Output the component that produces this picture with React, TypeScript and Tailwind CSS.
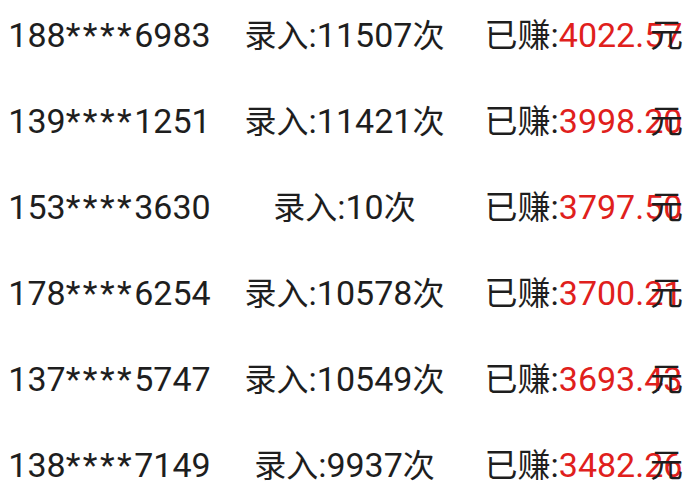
import React from 'react'

const rows = [
  { pre: '188', tail: '6983', count: '11507', money: '4022.57' },
  { pre: '139', tail: '1251', count: '11421', money: '3998.20' },
  { pre: '153', tail: '3630', count: '10', money: '3797.50' },
  { pre: '178', tail: '6254', count: '10578', money: '3700.21' },
  { pre: '137', tail: '5747', count: '10549', money: '3693.43' },
  { pre: '138', tail: '7149', count: '9937', money: '3482.26' },
]

export default function App() {
  return (
    <div
      className="w-[693px] h-[499px] bg-white text-[#1e1e1e] overflow-hidden flex flex-col gap-[16px]"
      style={{ fontFamily: 'Roboto, "Noto Sans CJK SC", sans-serif' }}
    >
      {rows.map((r) => (
        <div key={r.pre + r.tail} className="flex items-center shrink-0 h-[70px] text-[34px] leading-none">
          <div className="flex-1 text-center whitespace-nowrap">
            {r.pre}
            <span className="tracking-[2.5px]">****</span>
            {r.tail}
          </div>
          <div className="flex-1 text-center whitespace-nowrap pl-[16px]">
            <span className="text-[32px]">录入</span>:{r.count}
            <span className="text-[32px]">次</span>
          </div>
          <div className="flex-1 relative text-center whitespace-nowrap pl-[20px]">
            <span className="text-[33px]">已赚</span>:<span className="text-[#e0201c]">{r.money}</span>
            <span className="absolute right-[10px] top-1/2 -translate-y-1/2 text-[33px]">元</span>
          </div>
        </div>
      ))}
    </div>
  )
}
